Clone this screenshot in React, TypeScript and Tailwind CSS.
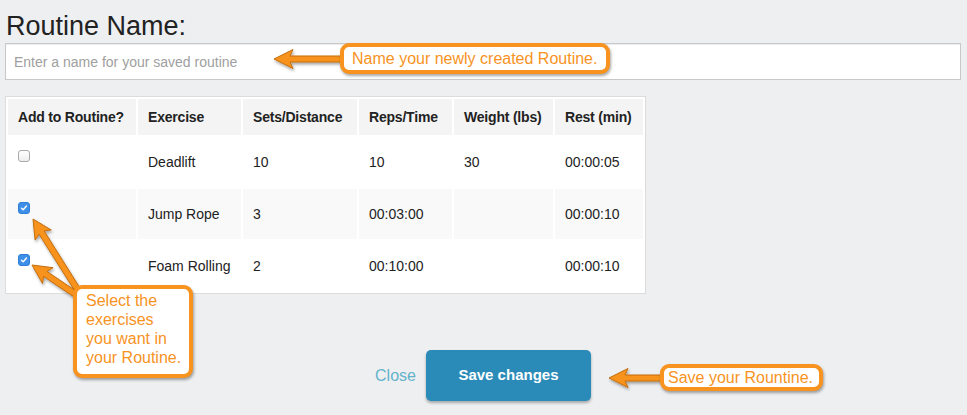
import React from 'react';

type Exercise = {
  checked: boolean;
  name: string;
  sets: string;
  reps: string;
  weight: string;
  rest: string;
};

const exercises: Exercise[] = [
  { checked: false, name: 'Deadlift', sets: '10', reps: '10', weight: '30', rest: '00:00:05' },
  { checked: true, name: 'Jump Rope', sets: '3', reps: '00:03:00', weight: '', rest: '00:00:10' },
  { checked: true, name: 'Foam Rolling', sets: '2', reps: '00:10:00', weight: '', rest: '00:00:10' },
];

const columns = [
  { label: 'Add to Routine?', width: 'w-[128px]' },
  { label: 'Exercise', width: 'w-[103px]' },
  { label: 'Sets/Distance', width: 'w-[114px]' },
  { label: 'Reps/Time', width: 'w-[93px]' },
  { label: 'Weight (lbs)', width: 'w-[99px]' },
  { label: 'Rest (min)', width: 'w-[88px]' },
];

function Checkbox({ checked }: { checked: boolean }) {
  if (!checked) {
    return <span className="block w-[12px] h-[12px] rounded-[3px] border border-[#a9a9a9] bg-gradient-to-b from-white to-[#eee]" />;
  }
  return (
    <span className="flex items-center justify-center w-[12px] h-[12px] rounded-[3px] bg-[#3d8fe8] border border-[#2f7fd6]">
      <svg width="8" height="8" viewBox="0 0 8 8">
        <path d="M1.5 4.2 L3.2 5.8 L6.5 2" stroke="white" strokeWidth="1.4" fill="none" strokeLinecap="round" strokeLinejoin="round" />
      </svg>
    </span>
  );
}

// arrow polygon from tail (x1,y1) to tip (x2,y2)
function arrowPoints(x1: number, y1: number, x2: number, y2: number) {
  const shaft = 6;
  const headLen = 16;
  const headW = 19;
  const dx = x2 - x1;
  const dy = y2 - y1;
  const len = Math.hypot(dx, dy);
  const ux = dx / len;
  const uy = dy / len;
  const px = -uy;
  const py = ux;
  const bx = x2 - ux * headLen;
  const by = y2 - uy * headLen;
  const wx = x2 - ux * (headLen + 3);
  const wy = y2 - uy * (headLen + 3);
  const pts = [
    [x1 + (px * shaft) / 2, y1 + (py * shaft) / 2],
    [bx + (px * shaft) / 2, by + (py * shaft) / 2],
    [wx + (px * headW) / 2, wy + (py * headW) / 2],
    [x2, y2],
    [wx - (px * headW) / 2, wy - (py * headW) / 2],
    [bx - (px * shaft) / 2, by - (py * shaft) / 2],
    [x1 - (px * shaft) / 2, y1 - (py * shaft) / 2],
  ];
  return pts.map((p) => `${p[0].toFixed(1)},${p[1].toFixed(1)}`).join(' ');
}

function Arrows() {
  const arrows = [
    [352, 59, 274, 59],
    [84, 300, 33, 219],
    [84, 300, 32, 265],
    [672, 378, 609, 378],
  ];
  return (
    <svg className="absolute inset-0 pointer-events-none" width="967" height="415">
      <defs>
        <filter id="shadow" x="-20%" y="-20%" width="140%" height="140%">
          <feDropShadow dx="1" dy="2" stdDeviation="1.5" floodColor="#000" floodOpacity="0.35" />
        </filter>
      </defs>
      {arrows.map((a, i) => (
        <polygon
          key={i}
          points={arrowPoints(a[0], a[1], a[2], a[3])}
          fill="#f7931e"
          stroke="#c46d0c"
          strokeWidth="1"
          strokeLinejoin="round"
          filter="url(#shadow)"
        />
      ))}
    </svg>
  );
}

export default function App() {
  return (
    <div className="relative w-[967px] h-[415px] overflow-hidden bg-[#eeeff1] font-['Liberation_Sans',Arial,sans-serif] text-[#222]">
      <div className="pl-[5px] pr-[6px] pt-[11px]">
        <h1 className="pl-px text-[27px] leading-[30px] font-normal">Routine Name:</h1>
        <input
          type="text"
          placeholder="Enter a name for your saved routine"
          className="mt-[2px] block w-full h-[37px] px-[8px] bg-white border border-[#c8c8c8] shadow-[inset_0_1px_1px_rgba(0,0,0,0.075)] text-[14px] placeholder:text-[#a0a0a0] outline-none"
        />

        <div className="mt-4 w-[641px] bg-white border border-[#dcdcdc]">
          <table className="table-fixed w-[639px] border-separate border-spacing-[2px] text-[14px] leading-[20px]">
            <thead>
              <tr>
                {columns.map((c) => (
                  <th key={c.label} className={`${c.width} h-[36px] pl-[10px] pr-0 text-left font-bold whitespace-nowrap bg-[#f4f4f4] tracking-[-0.2px]`}>
                    {c.label}
                  </th>
                ))}
              </tr>
            </thead>
            <tbody>
              {exercises.map((ex, i) => {
                const bg = i % 2 === 1 ? 'bg-[#f9f9f9]' : 'bg-white';
                return (
                  <tr key={ex.name}>
                    <td className={`${bg} h-[50px] px-[10px] pt-[13px] align-top`}>
                      <Checkbox checked={ex.checked} />
                    </td>
                    <td className={`${bg} px-[10px] whitespace-nowrap`}>{ex.name}</td>
                    <td className={`${bg} px-[10px]`}>{ex.sets}</td>
                    <td className={`${bg} px-[10px]`}>{ex.reps}</td>
                    <td className={`${bg} px-[10px]`}>{ex.weight}</td>
                    <td className={`${bg} px-[10px]`}>{ex.rest}</td>
                  </tr>
                );
              })}
            </tbody>
          </table>
        </div>

        <div className="mt-[56px] flex items-center justify-center gap-[10px]">
          <a className="text-[16px] text-[#64b2cb]">Close</a>
          <button className="h-[51px] w-[165px] rounded-[5px] bg-[#2b8bb8] text-white text-[15px] font-bold shadow-[0_2px_3px_rgba(0,0,0,0.3)]">
            Save changes
          </button>
        </div>
      </div>

      <Arrows />

      <div className="absolute left-[340px] top-[43px] w-[270px] h-[31px] flex items-center pl-[8px] bg-white border-4 border-[#f7931e] rounded-[9px] shadow-[1px_2px_3px_rgba(0,0,0,0.35)] text-[16px] text-[#f7931e] leading-none">
        Name your newly created Routine.
      </div>
      <div className="absolute left-[73px] top-[285px] w-[120px] h-[93px] pl-[9px] pt-[2px] bg-white border-4 border-[#f7931e] rounded-[9px] shadow-[1px_2px_3px_rgba(0,0,0,0.35)] text-[16px] leading-[19px] text-[#f7931e]">
        Select the
        <br />
        exercises
        <br />
        you want in
        <br />
        your Routine.
      </div>
      <div className="absolute left-[660px] top-[364px] w-[163px] h-[27px] flex items-center pl-[4px] bg-white border-4 border-[#f7931e] rounded-[9px] shadow-[1px_2px_3px_rgba(0,0,0,0.35)] text-[16px] text-[#f7931e] leading-none">
        Save your Rountine.
      </div>
    </div>
  );
}
